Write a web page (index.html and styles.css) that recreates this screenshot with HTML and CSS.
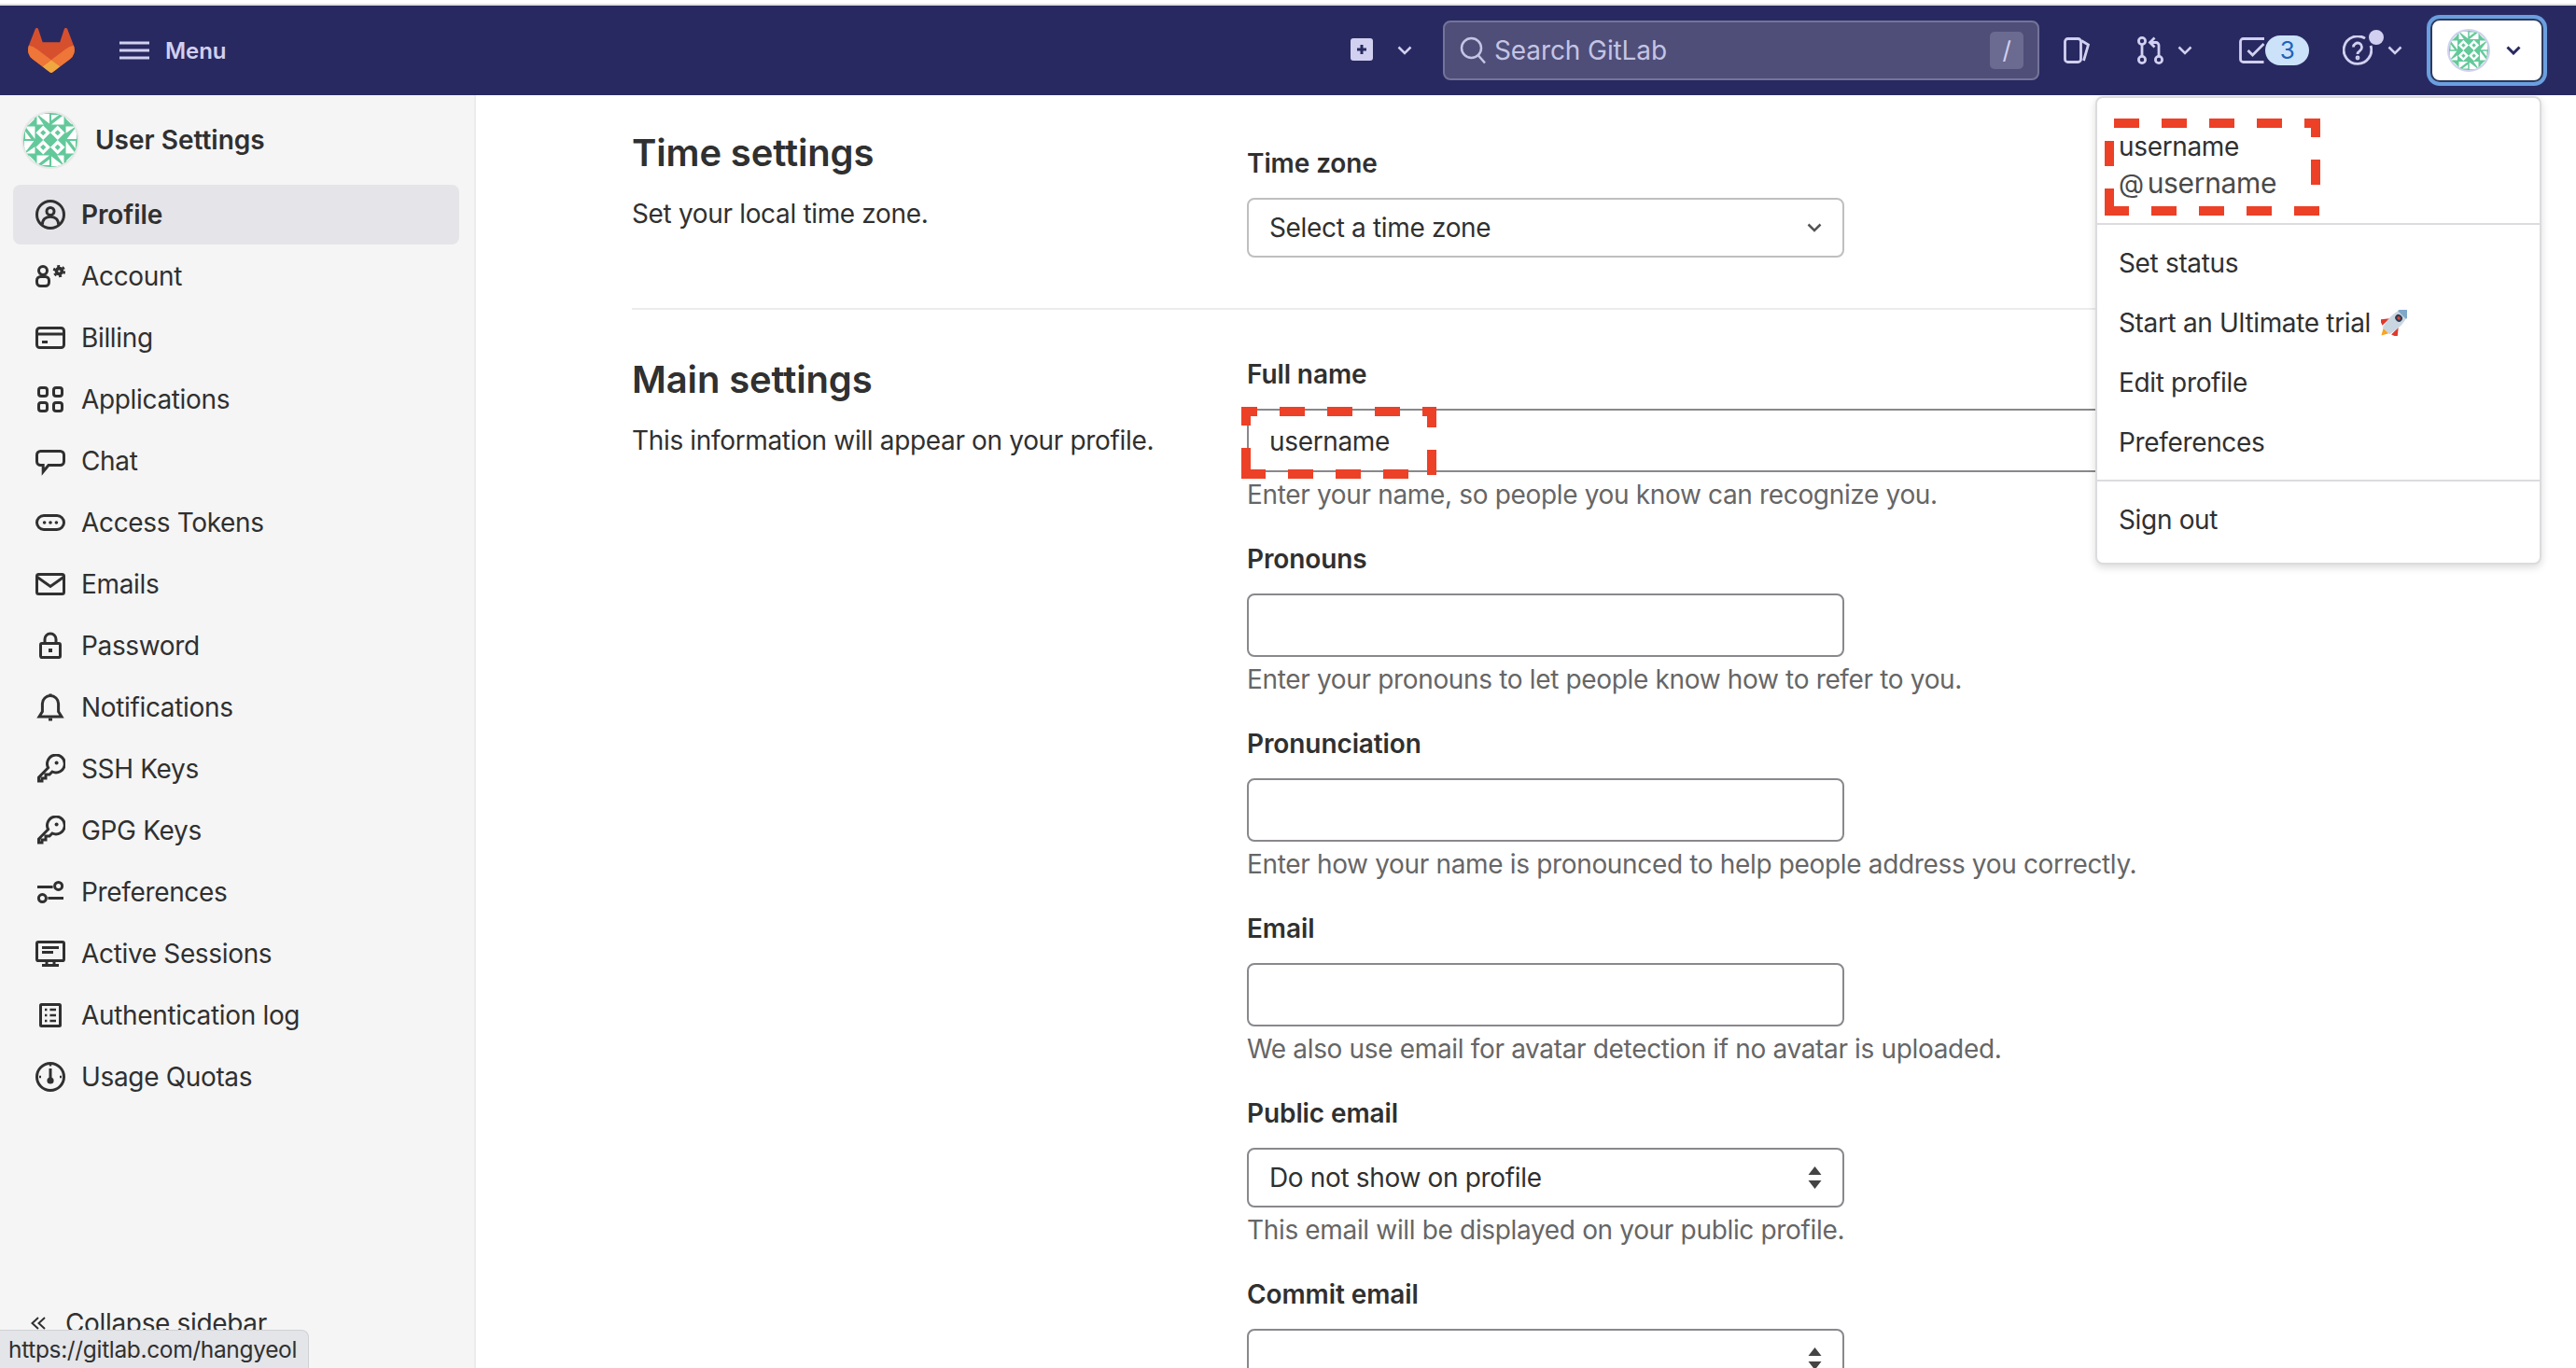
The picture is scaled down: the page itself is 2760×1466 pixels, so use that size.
FILE: index.html
```html
<!DOCTYPE html>
<html lang="en">
<head>
    <meta charset="UTF-8">
    <title>Profile · User Settings · GitLab</title>
    <link rel="stylesheet" href="styles.css">
</head>
<body>
    <svg class="defs" width="0" height="0">
        <symbol id="quilt" viewBox="0 0 56 56">
            <rect width="56" height="56" fill="#63c99a"/>
            <g id="q" fill="#fff">
                <polygon points="14,1 27,1 27,11"/>
                <polygon points="14,2 14,12 21,12"/>
                <polygon points="2,14 12,14 12,27"/>
                <polygon points="2,27 2,19 8,27"/>
                <polygon points="5,6 12,6 5,13"/>
                <path d="M20.500 13l7.500 7.500-7.500 7.500-7.500-7.500zM20.500 17.500l-3 3 3 3 3-3z"/>
            </g>
            <use href="#q" transform="rotate(90 28 28)"/>
            <use href="#q" transform="rotate(180 28 28)"/>
            <use href="#q" transform="rotate(270 28 28)"/>
        </symbol>
    </svg>

    <div class="top-strip"></div>

    <header class="navbar">
        <svg class="logo" viewBox="0 0 25 24">
            <path d="m24.507 9.5-.034-.09L21.082.562a.896.896 0 0 0-1.694.091l-2.29 7.01H7.825L5.535.653a.898.898 0 0 0-1.694-.09L.451 9.411.416 9.5a6.297 6.297 0 0 0 2.09 7.278l.012.01.03.022 5.16 3.867 2.56 1.935 1.554 1.176a1.051 1.051 0 0 0 1.268 0l1.555-1.176 2.56-1.935 5.197-3.89.014-.01A6.297 6.297 0 0 0 24.507 9.5Z" fill="#d6502e"/>
            <path d="m24.507 9.5-.034-.09a11.44 11.44 0 0 0-4.56 2.051l-7.447 5.632 4.742 3.584 5.197-3.89.014-.01A6.297 6.297 0 0 0 24.507 9.5Z" fill="#ee7638"/>
            <path d="m7.707 20.677 2.56 1.935 1.555 1.176a1.051 1.051 0 0 0 1.268 0l1.555-1.176 2.56-1.935-4.743-3.584-4.755 3.584Z" fill="#f1a73f"/>
            <path d="M5.01 11.461a11.43 11.43 0 0 0-4.56-2.05L.416 9.5a6.297 6.297 0 0 0 2.09 7.278l.012.01.03.022 5.16 3.867 4.745-3.584-7.444-5.632Z" fill="#ee7638"/>
        </svg>
        <svg class="hamburger" viewBox="0 0 32 20"><path d="M0 2h32M0 10h32M0 18h32"/></svg>
        <span class="menu-label">Menu</span>

        <svg class="plus-box" viewBox="0 0 24 24"><rect width="24" height="24" rx="3" fill="#d1d0f0"/><path d="M12 7v10M7 12h10" stroke="#292961" stroke-width="3"/></svg>
        <svg class="chev chev-new" viewBox="0 0 16 10"><path d="M1.500 1.500L8 8l6.500-6.500"/></svg>

        <div class="search">
            <svg class="search-icon" viewBox="0 0 28 30"><circle cx="12.500" cy="12.500" r="10.500"/><path d="M20 20.500l7 8"/></svg>
            <span class="search-text">Search GitLab</span>
            <kbd class="search-key">/</kbd>
        </div>

        <svg class="nav-icon icon-issues" viewBox="0 0 28 28"><rect x="1.500" y="1.500" width="17" height="25" rx="3"/><path d="M19 3.500l7.500 4.500-5 17"/></svg>
        <svg class="nav-icon icon-mr" viewBox="0 0 30 30"><circle cx="6" cy="5" r="3.600"/><circle cx="6" cy="25" r="3.600"/><circle cx="24" cy="25" r="3.600"/><path d="M6 9v12M24 21V9.500a3 3 0 0 0-3-3h-5M19.500 1.500L14.500 6.500l5 5"/></svg>
        <svg class="chev chev-mr" viewBox="0 0 16 10"><path d="M1.500 1.500L8 8l6.500-6.500"/></svg>

        <div class="todos">
            <svg class="nav-icon" viewBox="0 0 28 28"><path d="M27 1.500H4.500a3 3 0 0 0-3 3v19a3 3 0 0 0 3 3h22"/><path d="M9.500 14l5 5 12-12"/></svg>
            <span class="badge">3</span>
        </div>

        <div class="help">
            <svg class="nav-icon" viewBox="0 0 32 32"><path d="M24 3.200A14.800 14.800 0 1 0 30 11"/><path d="M11.500 12.500a4.500 4.500 0 1 1 7 3.800c-1.500 1-2.500 1.700-2.500 3.700"/><circle cx="16" cy="24" r="1"/></svg>
            <span class="help-dot"></span>
        </div>
        <svg class="chev chev-help" viewBox="0 0 16 10"><path d="M1.500 1.500L8 8l6.500-6.500"/></svg>

        <button class="avatar-btn">
            <svg class="avatar avatar-sm"><use href="#quilt"/></svg>
            <svg class="chev chev-dark" viewBox="0 0 16 10"><path d="M1.500 1.500L8 8l6.500-6.500"/></svg>
        </button>
    </header>

    <div class="layout">
        <aside class="sidebar">
            <div class="sidebar-head">
                <svg class="avatar avatar-lg"><use href="#quilt"/></svg>
                <span>User Settings</span>
            </div>
            <nav class="side-nav">
                <a class="side-item active">
                    <svg viewBox="0 0 16 16"><circle cx="8" cy="8" r="7.250"/><circle cx="8" cy="6.200" r="2"/><path d="M3.700 13.400c0-2.800 1.800-4.300 4.300-4.300s4.300 1.500 4.300 4.300"/></svg>
                    Profile
                </a>
                <a class="side-item">
                    <svg viewBox="0 0 16 16"><circle cx="4" cy="5" r="2.250"/><rect x=".75" y="8.250" width="6.500" height="5" rx="2"/><circle cx="12.700" cy="5.300" r="1.500" stroke-width="1.800"/><circle cx="12.700" cy="5.300" r="2.800" stroke-width="1.100" stroke-dasharray="1.500 1.430"/></svg>
                    Account
                </a>
                <a class="side-item">
                    <svg viewBox="0 0 16 16"><rect x=".75" y="2.750" width="14.500" height="10.500" rx="1.500"/><path d="M1 6h14M3.500 10.250h3"/></svg>
                    Billing
                </a>
                <a class="side-item">
                    <svg viewBox="0 0 16 16"><rect x="1.750" y="1.750" width="4.500" height="4.500" rx="1.300"/><rect x="9.750" y="1.750" width="4.500" height="4.500" rx="1.300"/><rect x="1.750" y="9.750" width="4.500" height="4.500" rx="1.300"/><rect x="9.750" y="9.750" width="4.500" height="4.500" rx="1.300"/></svg>
                    Applications
                </a>
                <a class="side-item">
                    <svg viewBox="0 0 16 16"><path d="M2.750 2.750h10.500a2 2 0 0 1 2 2v3.500a2 2 0 0 1-2 2H7l-2.900 3.500v-3.500H2.750a2 2 0 0 1-2-2v-3.500a2 2 0 0 1 2-2z"/></svg>
                    Chat
                </a>
                <a class="side-item">
                    <svg viewBox="0 0 16 16"><rect x=".75" y="4.250" width="14.500" height="7.500" rx="3.750"/><path class="dots" d="M4.800 8h.01M8 8h.01M11.200 8h.01"/></svg>
                    Access Tokens
                </a>
                <a class="side-item">
                    <svg viewBox="0 0 16 16"><rect x=".75" y="2.750" width="14.500" height="10.500" rx="1"/><path d="M1 4.250l7 5 7-5"/></svg>
                    Emails
                </a>
                <a class="side-item">
                    <svg viewBox="0 0 16 16"><rect x="2.750" y="6.750" width="10.500" height="7.500" rx=".7"/><path d="M5 6.750V4.500a3 3 0 0 1 6 0v2.250"/><rect class="solid" x="7" y="9.500" width="2" height="2"/></svg>
                    Password
                </a>
                <a class="side-item">
                    <svg viewBox="0 0 16 16"><path d="M8 1.800A4.300 4.300 0 0 0 3.700 6v4.300L2 13h12l-1.700-2.700V6A4.300 4.300 0 0 0 8 1.800z"/><path d="M7 14.500h2M8 .8v1"/></svg>
                    Notifications
                </a>
                <a class="side-item">
                    <svg viewBox="0 0 16 16"><path d="M1.750 14.500v-2L6.800 7.400A4.700 4.700 0 1 1 9 9.500L7.500 11h-2v2h-2v1.500z"/><circle class="solid" cx="11.300" cy="4.700" r="1"/></svg>
                    SSH Keys
                </a>
                <a class="side-item">
                    <svg viewBox="0 0 16 16"><path d="M1.750 14.500v-2L6.800 7.400A4.700 4.700 0 1 1 9 9.500L7.500 11h-2v2h-2v1.500z"/><circle class="solid" cx="11.300" cy="4.700" r="1"/></svg>
                    GPG Keys
                </a>
                <a class="side-item">
                    <svg viewBox="0 0 16 16"><path d="M1 5.250h8.300M6.700 11.250H15"/><circle cx="12.300" cy="4.700" r="2"/><circle cx="3.700" cy="11.300" r="2"/></svg>
                    Preferences
                </a>
                <a class="side-item">
                    <svg viewBox="0 0 16 16"><rect x=".75" y="1.750" width="14.500" height="10" rx=".8"/><path d="M3.500 4.750h9M3.500 7.250h6M6 12v2M10 12v2M3.500 14.250h9"/></svg>
                    Active Sessions
                </a>
                <a class="side-item">
                    <svg viewBox="0 0 16 16"><rect x="2.750" y="2.250" width="10.500" height="11.500" rx=".5"/><path class="thin" d="M5 5h1.200M7.700 5H11M5 8h1.200M7.700 8H11M5 11h1.200M7.700 11H11"/></svg>
                    Authentication log
                </a>
                <a class="side-item">
                    <svg viewBox="0 0 16 16"><circle cx="8" cy="8" r="7.250"/><path d="M8 3.500v5.500"/><circle class="solid" cx="8" cy="10" r="1.800"/><path class="thin" d="M3 8h-1M14 8h-1M8 1.500v.8"/></svg>
                    Usage Quotas
                </a>
            </nav>
            <div class="collapse-row">
                <svg viewBox="0 0 18 16"><path d="M9 2L2.500 8 9 14M16 2L9.500 8l6.500 6"/></svg>
                <span>Collapse sidebar</span>
            </div>
        </aside>

        <main class="content">
            <section class="settings-row row-time">
                <div class="settings-intro">
                    <h4>Time settings</h4>
                    <p>Set your local time zone.</p>
                </div>
                <div class="settings-form form-time">
                    <div class="field">
                        <label>Time zone</label>
                        <div class="control select select-light">
                            <span>Select a time zone</span>
                            <svg class="select-chev" viewBox="0 0 16 10"><path d="M1.500 1.500L8 8l6.500-6.500"/></svg>
                        </div>
                    </div>
                </div>
            </section>

            <section class="settings-row row-main">
                <div class="settings-intro">
                    <h4>Main settings</h4>
                    <p>This information will appear on your profile.</p>
                </div>
                <div class="settings-form">
                    <div class="field">
                        <label>Full name</label>
                        <div class="control input input-wide"><span>username</span></div>
                        <small>Enter your name, so people you know can recognize you.</small>
                    </div>
                    <div class="field">
                        <label>Pronouns</label>
                        <div class="control input"></div>
                        <small>Enter your pronouns to let people know how to refer to you.</small>
                    </div>
                    <div class="field">
                        <label>Pronunciation</label>
                        <div class="control input"></div>
                        <small>Enter how your name is pronounced to help people address you correctly.</small>
                    </div>
                    <div class="field">
                        <label>Email</label>
                        <div class="control input"></div>
                        <small>We also use email for avatar detection if no avatar is uploaded.</small>
                    </div>
                    <div class="field">
                        <label>Public email</label>
                        <div class="control select">
                            <span>Do not show on profile</span>
                            <svg class="select-arrows" viewBox="0 0 14 24"><path d="M7 0l7 9H0zM7 24l7-9H0z"/></svg>
                        </div>
                        <small>This email will be displayed on your public profile.</small>
                    </div>
                    <div class="field">
                        <label>Commit email</label>
                        <div class="control select">
                            <span></span>
                            <svg class="select-arrows" viewBox="0 0 14 24"><path d="M7 0l7 9H0zM7 24l7-9H0z"/></svg>
                        </div>
                    </div>
                </div>
            </section>
        </main>
    </div>

    <!-- user dropdown, open over the page -->
    <div class="user-menu">
        <div class="user-head">
            <div class="user-name">username</div>
            <div class="user-handle"><span class="at">@</span>username</div>
        </div>
        <ul class="menu-group">
            <li>Set status</li>
            <li>Start an Ultimate trial
                <svg class="rocket" viewBox="0 0 28 28">
                    <g transform="rotate(45 14 14) translate(14 14) scale(1.350 1.200) translate(-14 -14)">
                        <path d="M4 21l5-7v9zM24 21l-5-7v9z" fill="#e0392b"/>
                        <path d="M11 24h6l-3 6z" fill="#f6a623"/>
                        <path d="M14 -3c5 4 6 12 5 20l-1 7h-8l-1-7c-1-8 0-16 5-20z" fill="#c9d6e2"/>
                        <path d="M14 -3c3 2 4 4 4.800 7h-9.600c.8-3 1.800-5 4.800-7z" fill="#7fa8c9"/>
                        <circle cx="14" cy="8" r="3" fill="#2c3e50"/>
                        <circle cx="14" cy="8" r="1.400" fill="#d9453a"/>
                    </g>
                </svg>
            </li>
            <li>Edit profile</li>
            <li>Preferences</li>
        </ul>
        <ul class="menu-group menu-last">
            <li>Sign out</li>
        </ul>
    </div>

    <!-- red dashed annotations drawn on top of the screenshot -->
    <svg class="mark mark-menu" viewBox="0 0 231 104">
        <path d="M10 5H37M61 5H88M112 5H139M163 5H190M214 5H231M226 0V20M226 44V71M203 99H230M152 99H179M101 99H128M50 99H77M0 99H26M5 75V104M5 24V51"/>
    </svg>
    <svg class="mark mark-name" viewBox="0 0 209 77">
        <path d="M0 5H17M41 5H68M92 5H119M143 5H170M194 5H209M204 0V22M204 46V73M0 72H26M50 72H77M101 72H128M152 72H179M5 0V20M5 44V77"/>
    </svg>

    <div class="status-url">https://gitlab.com/hangyeol</div>
</body>
</html>
```

FILE: styles.css
```css
* {
    box-sizing: border-box;
}
html, body {
    margin: 0;
    height: 100%;
}
body {
    position: relative;
    height: 1466px;
    overflow: hidden;
    background: #fff;
    color: #303030;
    font-family: Inter, "Noto Sans", sans-serif;
    font-size: 28px;
    letter-spacing: -.34px;
}
.defs {
    position: absolute;
}
.top-strip {
    height: 6px;
    border-bottom: 2px solid #e1e1e1;
}

/* top bar */
.navbar {
    display: flex;
    align-items: center;
    height: 96px;
    padding: 0 35px 0 30px;
    background: #292961;
}
.logo {
    width: 50px;
    height: 48px;
    margin-top: -1px;
}
.hamburger {
    width: 32px;
    height: 20px;
    margin-left: 48px;
    fill: none;
    stroke: #d1d0f0;
    stroke-width: 3;
}
.menu-label {
    margin-left: 17px;
    color: #d1d0f0;
    font-size: 24px;
    font-weight: 600;
    letter-spacing: -.1px;
}
.plus-box {
    width: 24px;
    height: 24px;
    margin-left: auto;
    margin-top: -3px;
}
.chev {
    width: 16px;
    height: 10px;
    fill: none;
    stroke: #d1d0f0;
    stroke-width: 2.500;
}
.chev-new {
    margin-left: 26px;
}
.chev-mr {
    margin-left: 14px;
}
.chev-help {
    margin-left: 16px;
}
.chev-dark {
    stroke: #292961;
    stroke-width: 3;
}
.search {
    display: flex;
    align-items: center;
    width: 639px;
    height: 64px;
    margin-left: 33px;
    padding: 0 15px 0 16px;
    background: #4e4e78;
    border: 2px solid #74749a;
    border-radius: 8px;
}
.search-icon {
    width: 28px;
    height: 30px;
    fill: none;
    stroke: #c5c4e4;
    stroke-width: 2.500;
}
.search-text {
    margin-left: 9px;
    color: #c5c4e4;
    font-size: 28px;
    letter-spacing: -.1px;
}
.search-key {
    margin-left: auto;
    width: 36px;
    height: 40px;
    background: #6b6a90;
    border-radius: 5px;
    color: #d1d0f0;
    font-family: Inter, sans-serif;
    font-size: 26px;
    line-height: 40px;
    text-align: center;
}
.nav-icon {
    display: block;
    width: 28px;
    height: 28px;
    fill: none;
    stroke: #d1d0f0;
    stroke-width: 2.800;
}
.icon-issues {
    margin-left: 26px;
}
.icon-mr {
    width: 30px;
    height: 30px;
    margin-left: 50px;
}
.todos {
    position: relative;
    width: 75px;
    margin-left: 50px;
}
.badge {
    position: absolute;
    top: -2px;
    left: 28px;
    width: 47px;
    height: 32px;
    background: #cbe2f9;
    border-radius: 16px;
    color: #1f62ba;
    font-size: 26px;
    line-height: 32px;
    text-align: center;
}
.help {
    position: relative;
    width: 32px;
    margin-left: 36px;
}
.help .nav-icon {
    width: 32px;
    height: 32px;
}
.help-dot {
    position: absolute;
    top: -6px;
    left: 28px;
    width: 16px;
    height: 16px;
    background: #d1d0f0;
    border-radius: 50%;
}
.avatar-btn {
    display: flex;
    align-items: center;
    width: 121px;
    height: 68px;
    margin-left: 30px;
    padding: 0 0 0 16px;
    background: #fff;
    border: 2px solid #2e3a5c;
    border-radius: 10px;
    box-shadow: 0 0 0 4px #6a9fe0;
}
.avatar-btn .chev {
    margin-left: 17px;
}
.avatar {
    display: block;
    border-radius: 50%;
}
.avatar-sm {
    width: 46px;
    height: 46px;
    border: 2px solid #d1d0f0;
}
.avatar-lg {
    width: 62px;
    height: 62px;
    border: 2px solid #e8e8e8;
}

/* sidebar */
.layout {
    display: flex;
    height: 1364px;
}
.sidebar {
    display: flex;
    flex-direction: column;
    flex: none;
    width: 510px;
    background: #f5f5f5;
    border-right: 2px solid #ececec;
}
.sidebar-head {
    display: flex;
    align-items: center;
    gap: 17px;
    height: 96px;
    padding-left: 23px;
    font-weight: 600;
    letter-spacing: 0;
}
.side-nav {
    display: flex;
    flex-direction: column;
    gap: 2px;
    padding: 0 16px 0 14px;
}
.side-item {
    display: flex;
    align-items: center;
    gap: 17px;
    height: 64px;
    padding-left: 24px;
    border-radius: 8px;
}
.side-item.active {
    background: #e4e4e9;
    font-weight: 600;
    letter-spacing: -.1px;
}
.side-item svg {
    flex: none;
    width: 32px;
    height: 32px;
    fill: none;
    stroke: #303030;
    stroke-width: 1.500;
}
.side-item svg .solid {
    fill: #303030;
    stroke: none;
}
.side-item svg .dots {
    stroke-linecap: round;
    stroke-width: 1.800;
}
.side-item svg .thin {
    stroke-width: 1.200;
}
.collapse-row {
    display: flex;
    align-items: center;
    gap: 20px;
    margin-top: auto;
    height: 64px;
    margin-bottom: 16px;
    padding-left: 32px;
}
.collapse-row svg {
    width: 18px;
    height: 16px;
    fill: none;
    stroke: #303030;
    stroke-width: 2;
}

/* settings */
.content {
    flex: 1;
    padding-left: 167px;
    overflow: hidden;
}
.settings-row {
    display: grid;
    grid-template-columns: 659px 1064px;
}
.row-time {
    height: 230px;
    padding-top: 38px;
    border-bottom: 2px solid #ececec;
    width: 1723px;
}
.row-main {
    padding-top: 51px;
}
.settings-intro h4 {
    margin: 0;
    font-size: 40px;
    font-weight: 600;
    letter-spacing: -.15px;
    line-height: 48px;
}
.settings-intro p {
    margin: 21px 0 0;
    line-height: 40px;
}
.form-time {
    padding-top: 17px;
}
.field {
    margin-bottom: 31px;
}
.field label {
    display: block;
    margin-bottom: 19px;
    font-weight: 600;
    letter-spacing: -.1px;
    line-height: 36px;
}
.control {
    display: flex;
    align-items: center;
    justify-content: space-between;
    width: 640px;
    padding: 0 22px 0 22px;
    background: #fff;
    border: 2px solid #89888d;
    border-radius: 8px;
}
.input {
    height: 68px;
}
.input-wide {
    width: 1000px;
    padding-top: 2px;
    border-radius: 0;
}
.select {
    height: 64px;
}
.select-light {
    border-color: #bfbfbf;
}
.select-chev {
    width: 16px;
    height: 10px;
    fill: none;
    stroke: #555;
    stroke-width: 2.500;
}
.select-arrows {
    width: 15px;
    height: 24px;
    fill: #444;
}
.field small {
    display: block;
    padding-top: 4px;
    color: #666;
    font-size: 28px;
    line-height: 40px;
}

/* dropdown */
.user-menu {
    position: absolute;
    top: 103px;
    left: 2245px;
    width: 478px;
    height: 502px;
    background: #fff;
    border: 2px solid #dcdcde;
    border-radius: 8px;
    box-shadow: 0 3px 8px rgba(0, 0, 0, .15);
}
.user-head {
    height: 136px;
    padding: 32px 0 0 23px;
    border-bottom: 2px solid #dcdcde;
}
.user-name {
    line-height: 40px;
}
.user-handle {
    color: #4a4a4a;
    font-size: 30px;
    line-height: 38px;
}
.at {
    margin-right: 4px;
    font-size: 28px;
}
.menu-group {
    margin: 0;
    padding: 9px 0 8px;
    list-style: none;
    border-bottom: 2px solid #dcdcde;
}
.menu-group li {
    display: flex;
    align-items: center;
    gap: 11px;
    height: 64px;
    padding-left: 23px;
}
.menu-last {
    border-bottom: 0;
}
.rocket {
    width: 28px;
    height: 28px;
}
.mark {
    position: absolute;
    fill: none;
    stroke: #ec4027;
    stroke-width: 10;
}
.mark-menu {
    top: 127px;
    left: 2255px;
    width: 231px;
    height: 104px;
}
.mark-name {
    top: 436px;
    left: 1330px;
    width: 209px;
    height: 77px;
}
.status-url {
    position: absolute;
    left: 0;
    bottom: 0;
    width: 331px;
    height: 41px;
    padding-left: 9px;
    background: #e4e5e9;
    border: 1px solid #d0d1d5;
    border-left: 0;
    border-bottom: 0;
    border-top-right-radius: 8px;
    color: #303030;
    font-size: 24.500px;
    line-height: 40px;
}
```
